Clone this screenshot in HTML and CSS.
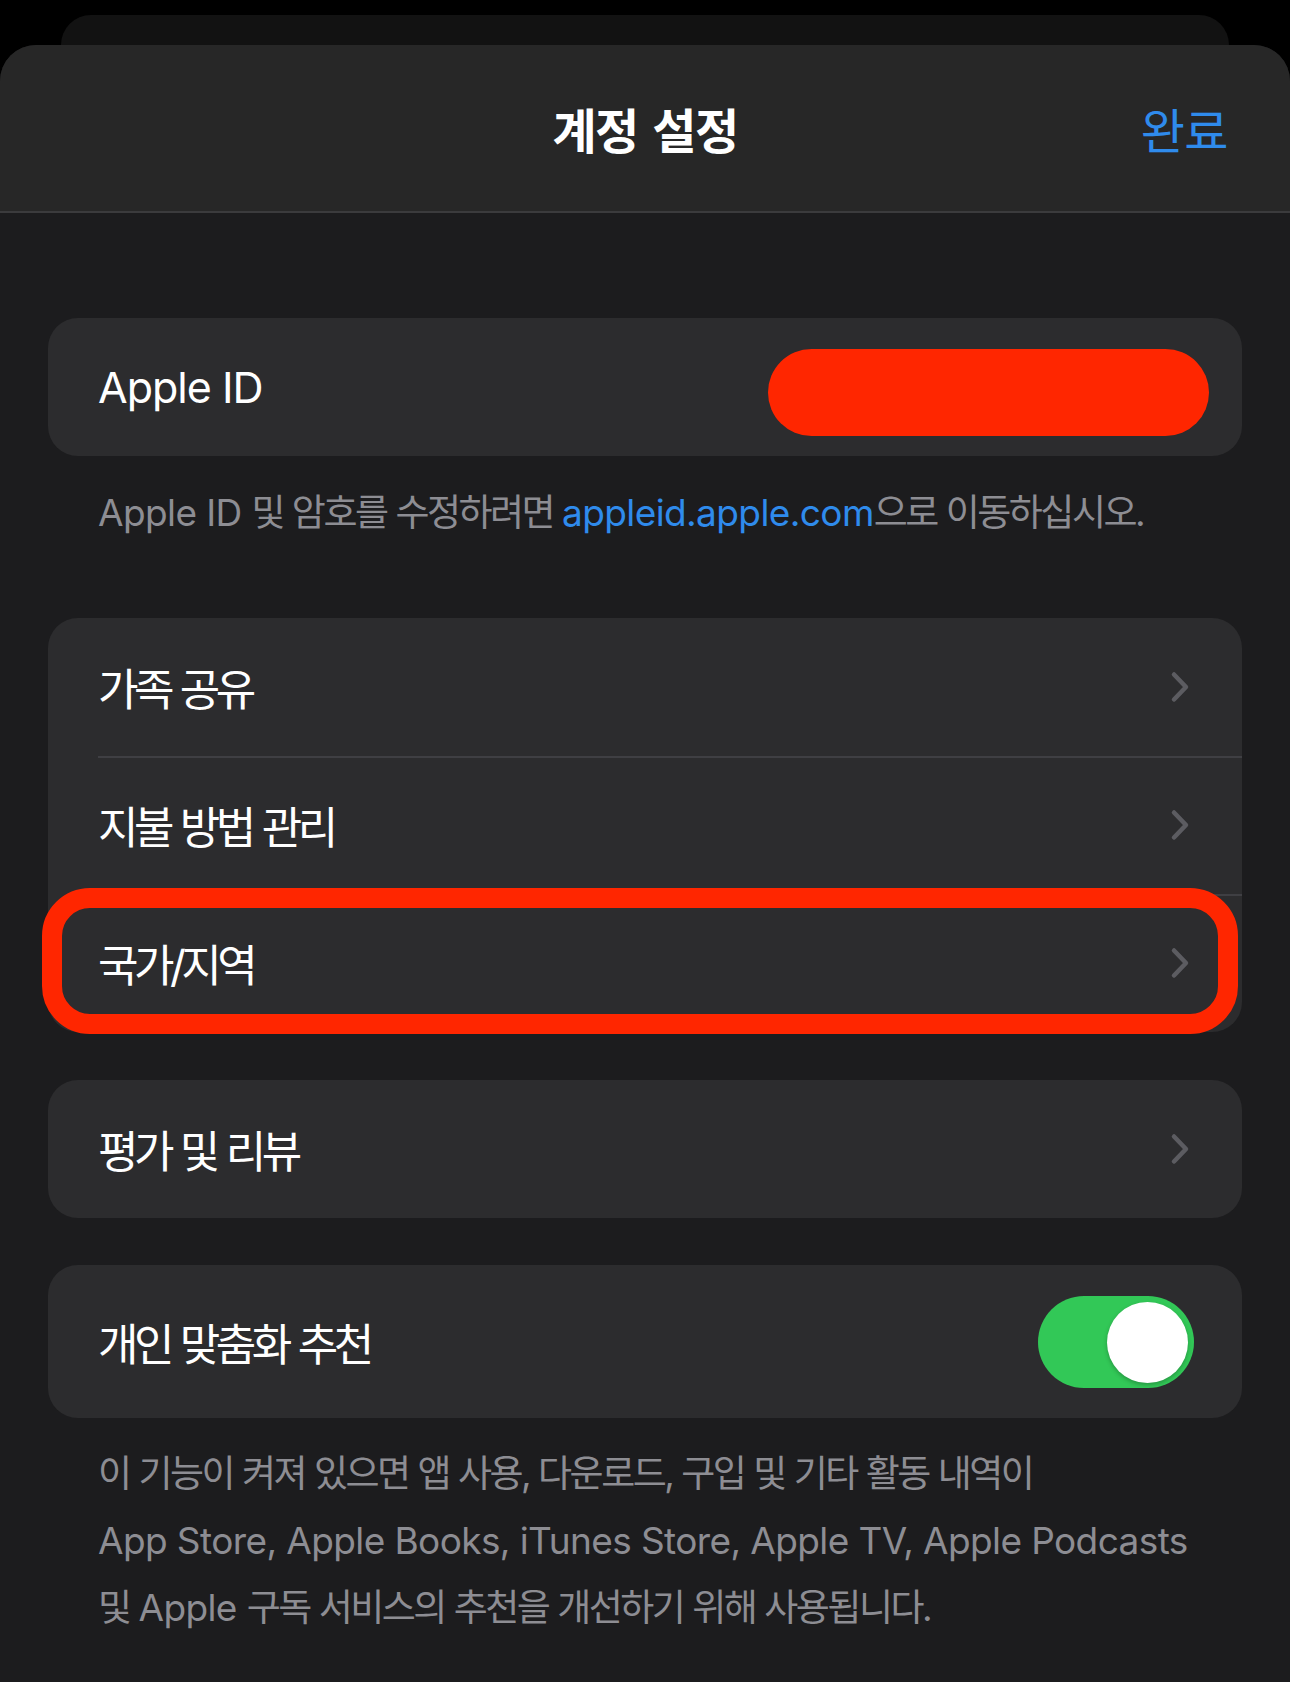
FILE: index.html
```html
<!DOCTYPE html>
<html lang="ko">
<head>
<meta charset="utf-8">
<title>계정 설정</title>
<link rel="stylesheet" href="styles.css">
</head>
<body>
<div class="screen">
  <div class="back-sheet"></div>
  <div class="sheet">
    <header class="navbar">
      <div class="nav-spacer"></div>
      <h1 class="nav-title">계정 설정</h1>
      <div class="nav-done">완료</div>
    </header>
    <main class="content">
      <section class="group">
        <div class="row">
          <span class="row-label en-label">Apple ID</span>
          <span class="redact"></span>
        </div>
      </section>
      <p class="footer footer-id"><span class="en">Apple ID </span>및 암호를 수정하려면 <span class="en link">appleid.apple.com</span>으로 이동하십시오.</p>

      <section class="group group-menu">
        <div class="row">
          <span class="row-label">가족 공유</span>
          <svg class="chevron" viewBox="0 0 20 32"><path d="M4 3.5 L16 16 L4 28.5"/></svg>
        </div>
        <div class="row">
          <span class="row-label">지불 방법 관리</span>
          <svg class="chevron" viewBox="0 0 20 32"><path d="M4 3.5 L16 16 L4 28.5"/></svg>
        </div>
        <div class="row">
          <span class="row-label">국가/지역</span>
          <svg class="chevron" viewBox="0 0 20 32"><path d="M4 3.5 L16 16 L4 28.5"/></svg>
        </div>
        <div class="highlight"></div>
      </section>

      <section class="group group-review">
        <div class="row">
          <span class="row-label">평가 및 리뷰</span>
          <svg class="chevron" viewBox="0 0 20 32"><path d="M4 3.5 L16 16 L4 28.5"/></svg>
        </div>
      </section>

      <section class="group group-toggle">
        <div class="row row-toggle">
          <span class="row-label">개인 맞춤화 추천</span>
          <span class="switch"><span class="knob"></span></span>
        </div>
      </section>
      <p class="footer footer-rec">이 기능이 켜져 있으면 앱 사용, 다운로드, 구입 및 기타 활동 내역이<br><span class="en">App Store, Apple Books, iTunes Store, Apple TV, Apple Podcasts</span><br>및 <span class="en">Apple </span>구독 서비스의 추천을 개선하기 위해 사용됩니다.</p>
    </main>
  </div>
</div>
</body>
</html>
```

FILE: styles.css
```css
* { box-sizing: border-box; }

html, body {
  margin: 0;
  padding: 0;
  background: #000;
}

body {
  font-family: Inter, "Noto Sans CJK KR", sans-serif;
  color: #fff;
}

.screen {
  width: 1290px;
  height: 1682px;
  overflow: hidden;
  padding-top: 15px;
  background: #000;
}

.back-sheet {
  height: 30px;
  margin: 0 61px;
  background: #121212;
  border-radius: 32px 32px 0 0;
}

.sheet {
  height: 1637px;
  background: #1c1c1e;
  border-radius: 36px 36px 0 0;
  overflow: hidden;
}

.navbar {
  height: 168px;
  background: #272727;
  border-bottom: 2px solid #3b3b3d;
  display: grid;
  grid-template-columns: 1fr auto 1fr;
  align-items: center;
  padding: 0 62px 0 62px;
}

.nav-title {
  margin: 0;
  font-size: 48px;
  font-weight: 600;
  letter-spacing: -1.5px;
  word-spacing: 4px;
}

.nav-done {
  justify-self: end;
  font-size: 48px;
  color: #2f8bec;
  letter-spacing: -0.5px;
}

.content {
  padding: 105px 48px 0 48px;
}

.group {
  background: #2c2c2e;
  border-radius: 30px;
  position: relative;
}

.row {
  height: 138px;
  display: flex;
  align-items: center;
  justify-content: space-between;
  padding: 0 52px 0 50px;
  position: relative;
}

.group-menu .row + .row::before {
  content: "";
  position: absolute;
  top: 0;
  left: 50px;
  right: 0;
  height: 1.5px;
  background: #3f3f43;
}

.row-label {
  font-size: 44px;
  letter-spacing: -4.5px;
  word-spacing: 2px;
}

.en-label {
  font-size: 43px;
  letter-spacing: -1px;
  word-spacing: 0;
}

.redact {
  width: 441px;
  height: 87px;
  margin-right: -19px;
  margin-top: 10px;
  border-radius: 44px;
  background: #ff2600;
}

.chevron {
  width: 20px;
  height: 32px;
  fill: none;
  stroke: #5c5c61;
  stroke-width: 4.5;
  stroke-linecap: round;
  stroke-linejoin: round;
}

.footer {
  margin: 0;
  color: #8d8d93;
  font-size: 37px;
  letter-spacing: -2.5px;
  word-spacing: 1px;
  padding-left: 50px;
}

.footer .en {
  letter-spacing: -0.6px;
  word-spacing: 0;
}

.footer-id {
  line-height: 50px;
  margin-top: 32px;
  margin-bottom: 80px;
}

.link {
  color: #2f8bec;
}

.highlight {
  position: absolute;
  left: -6px;
  top: 270px;
  width: 1196px;
  height: 146px;
  border: 20px solid #ff2600;
  border-radius: 48px;
}

.group-review {
  margin-top: 48px;
}

.group-toggle {
  margin-top: 47px;
}

.row-toggle {
  height: 153px;
  padding-right: 48px;
}

.switch {
  width: 156px;
  height: 92px;
  border-radius: 46px;
  background: #32c857;
  position: relative;
  display: block;
}

.knob {
  position: absolute;
  right: 6px;
  top: 6px;
  width: 81px;
  height: 81px;
  border-radius: 50%;
  background: #fff;
  box-shadow: 0 2px 4px rgba(0, 0, 0, 0.25);
}

.footer-rec {
  line-height: 67px;
  margin-top: 22px;
}
```
